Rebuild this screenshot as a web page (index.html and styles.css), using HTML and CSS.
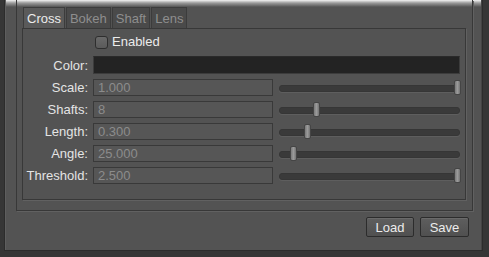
FILE: index.html
```html
<!DOCTYPE html>
<html lang="en">
<head>
    <meta charset="UTF-8">
    <title>Cross Effect</title>
    <link rel="stylesheet" href="styles.css">
</head>
<body>
    <div class="window">
        <div class="group">
            <div class="tabs">
                <div class="tab active">Cross</div>
                <div class="tab">Bokeh</div>
                <div class="tab">Shaft</div>
                <div class="tab">Lens</div>
            </div>
            <div class="pane">
                <div class="form">
                    <div></div>
                    <label class="check"><span class="box"></span>Enabled</label>

                    <div class="label">Color:</div>
                    <div class="color-field"></div>

                    <div class="label">Scale:</div>
                    <div class="field">1.000</div>
                    <div class="slider"><span class="handle" style="left:175px"></span></div>

                    <div class="label">Shafts:</div>
                    <div class="field">8</div>
                    <div class="slider"><span class="handle" style="left:34px"></span></div>

                    <div class="label">Length:</div>
                    <div class="field">0.300</div>
                    <div class="slider"><span class="handle" style="left:25px"></span></div>

                    <div class="label">Angle:</div>
                    <div class="field">25.000</div>
                    <div class="slider"><span class="handle" style="left:11px"></span></div>

                    <div class="label">Threshold:</div>
                    <div class="field">2.500</div>
                    <div class="slider"><span class="handle" style="left:175px"></span></div>
                </div>
            </div>
        </div>
        <div class="buttons">
            <button class="button load">Load</button>
            <button class="button save">Save</button>
        </div>
    </div>
</body>
</html>
```

FILE: styles.css
```css
/* --- Base --- */
* {
    margin: 0;
    padding: 0;
    box-sizing: border-box;
    font-family: "Liberation Sans", Arial, sans-serif;
}

body {
    background: #363636;
    color: #e4e4e4;
    font-size: 13px;
    width: 489px;
    height: 257px;
    overflow: hidden;
}

/* --- Window --- */
.window {
    margin-left: 4px;
    width: 479px;
    height: 251px;
    background: linear-gradient(#f4f4f4 0, #9a9a9a 3px, #535353 7px, #535353 100%);
    border-left: 1px solid #2c2c2c;
    border-right: 1px solid #2c2c2c;
    border-bottom: 1px solid #2c2c2c;
    box-shadow: inset 1px 0 0 #5e5e5e, inset -1px 0 0 #444;
}

/* --- Group frame --- */
.group {
    margin-left: 11px;
    width: 457px;
    height: 211px;
    border: 1px solid #383838;
    border-top: none;
    box-shadow: 1px 1px 0 #616161;
    padding: 7px 6px 0 5px;
}

/* --- Tabs --- */
.tabs {
    display: flex;
    gap: 1px;
    height: 21px;
    padding-left: 1px;
}

.tab {
    height: 21px;
    padding: 2px 3px 0 3px;
    background: #4a4a4a;
    color: #8e8e8e;
    border: 1px solid #3c3c3c;
    border-bottom: none;
    line-height: 17px;
}

.tab.active {
    background: #5a5a5a;
    color: #ececec;
}

.pane {
    width: 444px;
    height: 172px;
    border: 1px solid #383838;
    box-shadow: 1px 1px 0 #616161;
    background: #535353;
    padding: 6px 5px 0 0;
}

/* --- Form --- */
.form {
    display: grid;
    grid-template-columns: 65px 180px 1fr;
    grid-template-rows: 16px 18px repeat(5, 17px);
    column-gap: 5px;
    row-gap: 5px;
    align-items: center;
}

.label {
    text-align: right;
    color: #e4e4e4;
    line-height: 17px;
}

.check {
    grid-column: 2 / 4;
    align-self: start;
    display: flex;
    align-items: center;
    gap: 4px;
    color: #ececec;
    line-height: 14px;
    margin-left: 2px;
}

.check .box {
    width: 13px;
    height: 13px;
    border: 1px solid #2e2e2e;
    border-radius: 3px;
    background: linear-gradient(#6a6a6a, #5a5a5a);
}

.color-field {
    grid-column: 2 / 4;
    height: 18px;
    background: #232323;
    border: 1px solid #3c3c3c;
    border-top-color: #2a2a2a;
    margin-top: -1px;
}

.field {
    height: 17px;
    border: 1px solid #393939;
    background: #565656;
    color: #8c8c8c;
    padding-left: 4px;
    line-height: 15px;
}

/* --- Sliders --- */
.slider {
    position: relative;
    height: 17px;
    margin-left: 1px;
}

.slider::before {
    content: "";
    position: absolute;
    left: 0;
    right: 0;
    top: 6px;
    height: 5px;
    border-radius: 3px;
    background: #3a3a3a;
    border: 1px solid #363636;
    box-shadow: 0 1px 0 #5e5e5e;
}

.handle {
    position: absolute;
    top: 1px;
    width: 7px;
    height: 15px;
    border-radius: 2px;
    background: linear-gradient(90deg, #7a7a7a, #9a9a9a 50%, #747474);
    border: 1px solid #454545;
}

/* --- Buttons --- */
.buttons {
    display: flex;
    justify-content: flex-end;
    gap: 6px;
    padding: 6px 13px 0 0;
}

.button {
    height: 20px;
    border: 1px solid #2c2c2c;
    border-radius: 2px;
    background: linear-gradient(#5e5e5e, #505050);
    color: #ececec;
    font-size: 13px;
    box-shadow: inset 0 1px 0 #6a6a6a;
}

.button.load {
    width: 48px;
}

.button.save {
    width: 49px;
}
```
